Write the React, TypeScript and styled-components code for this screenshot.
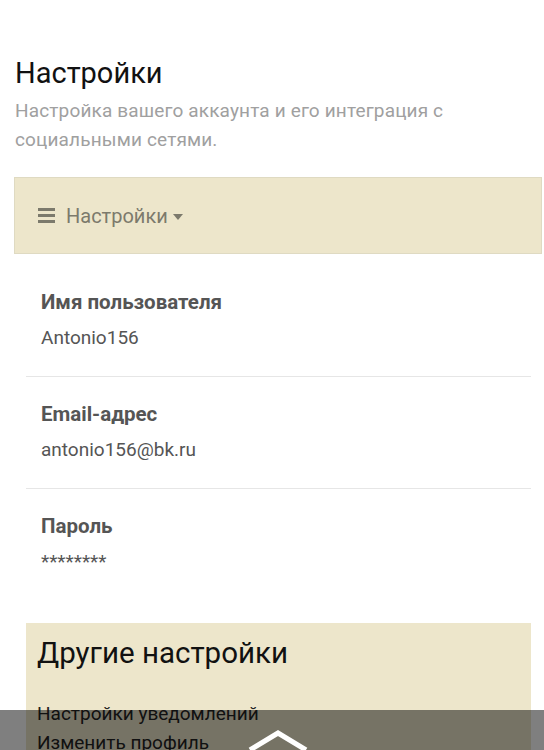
import React from "react";
import styled, { createGlobalStyle } from "styled-components";

const GlobalStyle = createGlobalStyle`
    html, body {
        margin: 0;
        padding: 0;
        background: #fff;
        font-family: Roboto, "Noto Sans", "Liberation Sans", sans-serif;
    }
`

interface IField {
    label: string,
    value: string
}

const fields: IField[] = [
    { label: "Имя пользователя", value: "Antonio156" },
    { label: "Email-адрес", value: "antonio156@bk.ru" },
    { label: "Пароль", value: "********" },
]

const links = ["Настройки уведомлений", "Изменить профиль"]

const App: React.FC = () => {
    return (
        <>
            <GlobalStyle />
            <Page>
                <Title>Настройки</Title>
                <Subtitle>
                    Настройка вашего аккаунта и его интеграция с социальными сетями.
                </Subtitle>
                <NavBar>
                    <Burger>
                        <span />
                        <span />
                        <span />
                    </Burger>
                    <NavText>Настройки</NavText>
                    <Caret />
                </NavBar>
                <FieldList>
                    {fields.map((f, i) => (
                        <Field key={f.label} last={i === fields.length - 1}>
                            <FieldLabel>{f.label}</FieldLabel>
                            <FieldValue>{f.value}</FieldValue>
                        </Field>
                    ))}
                </FieldList>
                <OtherPanel>
                    <OtherTitle>Другие настройки</OtherTitle>
                    <LinkList>
                        {links.map((l) => (
                            <LinkItem key={l}>{l}</LinkItem>
                        ))}
                    </LinkList>
                </OtherPanel>
            </Page>
            <BottomBar>
                <svg width="60" height="24" viewBox="0 0 60 24">
                    <polyline points="2,22 30,5 58,22" fill="none" stroke="#fff" strokeWidth="5" />
                </svg>
            </BottomBar>
        </>
    )
}

const Page = styled.div`
    padding: 55px 2px 40px 14px;
`

const Title = styled.h1`
    margin: 0 0 0 1px;
    font-size: 29px;
    font-weight: 400;
    line-height: 36px;
    color: #111;
`

const Subtitle = styled.p`
    margin: 5px 0 0 1px;
    font-size: 19px;
    letter-spacing: 0.15px;
    line-height: 29px;
    color: #a0a0a0;
    max-width: 470px;
`

const NavBar = styled.div`
    display: flex;
    align-items: center;
    height: 75px;
    margin-top: 23px;
    padding-left: 23px;
    background: #ede6cb;
    border: 1px solid #dfdac2;
`

const Burger = styled.div`
    display: flex;
    flex-direction: column;
    gap: 3px;
    width: 17px;
    margin-right: 11px;

    span {
        display: block;
        height: 3px;
        background: #7c7a6c;
    }
`

const NavText = styled.span`
    font-size: 20px;
    color: #7c7a6c;
`

const Caret = styled.span`
    width: 0;
    height: 0;
    margin-left: 5px;
    margin-top: 2px;
    border-left: 5px solid transparent;
    border-right: 5px solid transparent;
    border-top: 6px solid #7c7a6c;
`

const FieldList = styled.div`
    margin: 11px 11px 0 12px;
`

const Field = styled.div<{ last?: boolean }>`
    padding: 25px 15px 26px;
    border-bottom: ${(p) => (p.last ? "none" : "1px solid #e6e6e6")};
`

const FieldLabel = styled.div`
    font-size: 20.5px;
    font-weight: 700;
    line-height: 24px;
    color: #555;
`

const FieldValue = styled.div`
    margin-top: 12px;
    font-size: 19px;
    line-height: 24px;
    color: #555;
`

const OtherPanel = styled.div`
    margin: 23px 11px 0 12px;
    padding: 12px 11px 20px;
    background: #ede6cb;
`

const OtherTitle = styled.h2`
    margin: 0;
    font-size: 29.5px;
    font-weight: 400;
    line-height: 36px;
    color: #111;
`

const LinkList = styled.div`
    display: flex;
    flex-direction: column;
    margin-top: 28px;
`

const LinkItem = styled.span`
    font-size: 19px;
    line-height: 29px;
    color: #222;
`

const BottomBar = styled.div`
    position: fixed;
    left: 0;
    right: 0;
    bottom: 0;
    height: 40px;
    display: flex;
    justify-content: center;
    align-items: flex-end;
    background: rgba(0, 0, 0, 0.5);

    svg {
        margin-left: 12px;
        margin-bottom: -2px;
    }
`

export default App;
